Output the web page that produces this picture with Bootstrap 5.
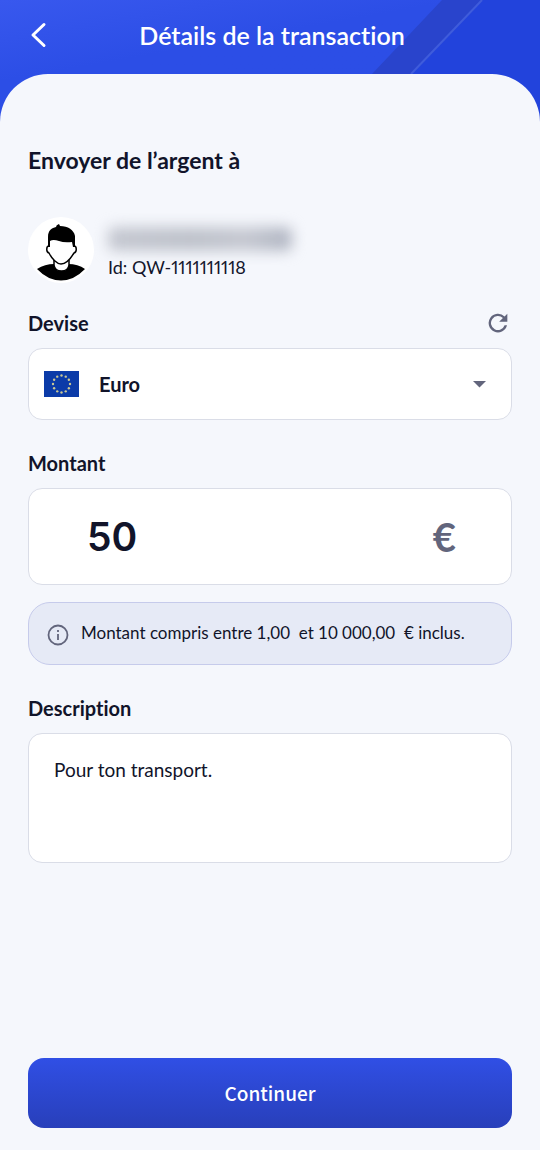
<!DOCTYPE html>
<html lang="fr">
<head>
<meta charset="utf-8">
<meta name="viewport" content="width=device-width, initial-scale=1">
<title>Détails de la transaction</title>
<link rel="stylesheet" href="https://cdn.jsdelivr.net/npm/bootstrap@5.3.0/dist/css/bootstrap.min.css">
<style>
  :root { --ink: #11142a; --muted: #62657c; --line: #dadde7; --page: #f5f7fc; }
  body { font-family: Lato, "Noto Sans", sans-serif; font-variant-ligatures: none; color: var(--ink); background: var(--page); }
  .backdrop { background: linear-gradient(170deg, #3858ee 0, #2c4ee6 80px, #2c4de5 100%); }
  .stripes { width: 170px; height: 124px; }
  .topbar { height: 74px; padding: 0 28px 4px; }
  .topbar h1 { font-size: 25px; line-height: 32px; font-weight: 600; }
  .back { width: 20px; height: 32px; }
  .sheet { background: var(--page); border-radius: 48px 48px 0 0; padding: 70px 28px 22px; }
  .sheet h2 { font-size: 23px; line-height: 32px; font-weight: 700; margin-bottom: 41px; }
  .avatar { width: 66px; height: 66px; }
  .person { padding: 6px 0 0 14px; }
  .hidden-name { width: 184px; height: 24px; border-radius: 6px; background: linear-gradient(90deg, #c4c7d0, #bdc1ca 45%, #c4c7d0 75%, #b0b5c2); filter: blur(7px); }
  .person-id { font-size: 18px; line-height: 24px; font-variant-numeric: proportional-nums; }
  .field-label { font-size: 20px; line-height: 32px; font-weight: 700; }
  .block { margin-top: 27px; }
  .field-head { margin-bottom: 9px; }
  .field { border: 1px solid var(--line); border-radius: 14px; background-color: #fff; color: var(--ink); }
  .currency { height: 72px; padding: 0 56px 0 70px; font-size: 20px; font-weight: 700; background-image: none; }
  .flag { left: 16px; width: 35px; height: 26px; }
  .caret { right: 26px; width: 13px; height: 8px; }
  .amount { height: 97px; padding: 0 55px 0 58px; }
  .amount input { font-family: Inter, sans-serif; font-size: 39px; line-height: 48px; font-weight: 600; color: var(--ink); }
  .unit { font-size: 40px; line-height: 48px; font-weight: 700; color: var(--muted); }
  .note { min-height: 63px; margin-top: 17px; padding: 0 18px 2px; gap: 12px; border: 1px solid #c6cbeb; border-radius: 22px; background: #e6eaf6; font-size: 17px; line-height: 24px; }
  .details { height: 130px; padding: 24px 25px; font-size: 19px; line-height: 24px; resize: none; }
  .continue { height: 70px; border: 0; border-radius: 16px; background: linear-gradient(#304fe5, #283fba); color: #fff; font-family: "Noto Sans CJK SC", sans-serif; font-size: 19px; font-weight: 500; }
</style>
</head>
<body>
<div class="backdrop position-relative min-vh-100 d-flex flex-column">
  <svg class="stripes position-absolute top-0 end-0" viewBox="0 0 170 124" aria-hidden="true">
    <path d="M112 0H170V124H0V116Z" fill="#1f40d8" opacity=".75"/>
    <path d="M72 0H113L42 74H2Z" fill="#2944cc"/>
    <path d="M112 0L41 74" stroke="#3f5cdc" stroke-width="2"/>
  </svg>
  <header class="topbar position-relative d-flex align-items-center">
    <button class="back btn p-0 border-0 d-flex align-items-center" type="button" aria-label="Retour">
      <svg width="20" height="26" viewBox="0 0 20 26" fill="none" stroke="#fff" stroke-width="3" stroke-linecap="round" stroke-linejoin="round" aria-hidden="true"><path d="M16 2.500L5 13L16 23.500"/></svg>
    </button>
    <h1 class="flex-grow-1 text-center text-white m-0 pe-3">Détails de la transaction</h1>
  </header>

  <main class="sheet position-relative flex-grow-1 d-flex flex-column">
    <h2>Envoyer de l’argent à</h2>

    <div class="d-flex align-items-center">
      <svg class="avatar flex-shrink-0" viewBox="0 0 66 66" role="img" aria-label="Photo du bénéficiaire">
        <circle cx="33" cy="33" r="33" fill="#fff"/>
        <path d="M9 52Q17 47 26 47C26 56 40 56 40 47Q50 47 57 52Q46 63.500 33 63.500Q20 63.500 9 52Z"/>
        <path d="M26 42V48C27 56 40 56 41 48V42" fill="#fff" stroke="#000" stroke-width="1.500"/>
        <path d="M21 22V29C18 29 18 35 21 36C24 42 29 47 33 47C38 47 43 41 46 36C49 35 49 29 46 29V22Z" fill="#fff" stroke="#000" stroke-width="1.500"/>
        <path d="M20 30V20C20 13 24 11 28 10Q28 8 31 7L32 9C40 9 46 13 47 19V30H45L44 25Q36 26 31 24Q25 22 22 24V30Z"/>
      </svg>
      <div class="person">
        <div class="hidden-name"></div>
        <div class="person-id mt-1">Id: QW-1111111118</div>
      </div>
    </div>

    <div class="mt-4">
      <div class="field-head d-flex justify-content-between align-items-center">
        <label class="field-label" for="devise">Devise</label>
        <button class="btn p-0 border-0 d-flex" type="button" aria-label="Actualiser">
          <svg width="28" height="28" viewBox="0 0 24 24" fill="#62657c" aria-hidden="true"><path d="M17.650 6.350A8 8 0 1 0 19.730 14H17.650A6 6 0 1 1 16.220 7.780L13 11H20V4Z"/></svg>
        </button>
      </div>
      <div class="position-relative d-flex align-items-center">
        <select class="field currency form-select" id="devise"><option selected>Euro</option></select>
        <svg class="flag position-absolute pe-none" viewBox="0 0 35 26" aria-hidden="true">
          <path fill="#0b3ba8" d="M0 0H35V26H0Z"/>
          <g fill="#c9c795">
            <circle cx="17.500" cy="4.500" r="1.200"/><circle cx="21.750" cy="5.640" r="1.200"/><circle cx="24.860" cy="8.750" r="1.200"/><circle cx="26" cy="13" r="1.200"/><circle cx="24.860" cy="17.250" r="1.200"/><circle cx="21.750" cy="20.360" r="1.200"/><circle cx="17.500" cy="21.500" r="1.200"/><circle cx="13.250" cy="20.360" r="1.200"/><circle cx="10.140" cy="17.250" r="1.200"/><circle cx="9" cy="13" r="1.200"/><circle cx="10.140" cy="8.750" r="1.200"/><circle cx="13.250" cy="5.640" r="1.200"/>
          </g>
        </svg>
        <svg class="caret position-absolute pe-none" viewBox="0 0 13 8" aria-hidden="true"><path fill="#62657c" d="M0 1H13L6.500 7.500Z"/></svg>
      </div>
    </div>

    <div class="block">
      <div class="field-head d-flex"><label class="field-label" for="montant">Montant</label></div>
      <div class="field amount d-flex align-items-center">
        <input class="flex-grow-1 w-100 p-0 border-0 bg-transparent" id="montant" type="text" inputmode="decimal" value="50">
        <span class="unit">€</span>
      </div>
    </div>

    <div class="note d-flex align-items-center">
      <svg class="flex-shrink-0 mt-1" width="22" height="22" viewBox="0 0 22 22" fill="none" stroke="#62657c" stroke-width="1.800" aria-hidden="true"><circle cx="11" cy="11" r="9.500"/><path d="M11 10V16M11 6V8"/></svg>
      <span>Montant compris entre 1,00&nbsp; et 10&#8239;000,00&nbsp; € inclus.</span>
    </div>

    <div class="block">
      <div class="field-head d-flex"><label class="field-label" for="description">Description</label></div>
      <textarea class="field details form-control" id="description">Pour ton transport.</textarea>
    </div>

    <button class="continue btn w-100 mt-auto" type="button">Continuer</button>
  </main>
</div>
<script src="https://cdn.jsdelivr.net/npm/bootstrap@5.3.0/dist/js/bootstrap.bundle.min.js"></script>
</body>
</html>
